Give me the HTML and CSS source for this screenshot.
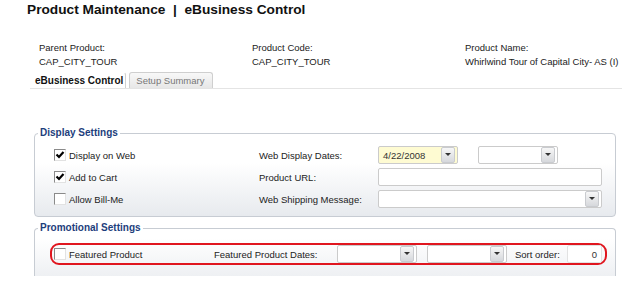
FILE: index.html
```html
<!DOCTYPE html>
<html lang="en">
<head>
    <meta charset="UTF-8">
    <title>Product Maintenance | eBusiness Control</title>
    <link rel="stylesheet" href="styles.css">
</head>
<body>
<h1 class="title">Product Maintenance &nbsp;|&nbsp; eBusiness Control</h1>

<div class="info">
    <div class="info-item">
        <div>Parent Product:</div>
        <div>CAP_CITY_TOUR</div>
    </div>
    <div class="info-item">
        <div>Product Code:</div>
        <div>CAP_CITY_TOUR</div>
    </div>
    <div class="info-item">
        <div>Product Name:</div>
        <div>Whirlwind Tour of Capital City- AS (I)</div>
    </div>
</div>

<div class="tabs">
    <span class="tab active">eBusiness Control</span>
    <span class="tab">Setup Summary</span>
</div>

<fieldset class="panel">
    <legend>Display Settings</legend>
    <div class="form-grid">
        <div class="check-row">
            <span class="cb checked"><svg viewBox="0 0 10 10" width="10" height="10"><path d="M1.5 4.5 L4 7 L8.5 2" fill="none" stroke="#000" stroke-width="2.2"/></svg></span>
            <span>Display on Web</span>
        </div>
        <div class="field-label">Web Display Dates:</div>
        <div class="field-row">
            <div class="field date yellow">4/22/2008<span class="drop"></span></div>
            <div class="field date gap">
                <span class="drop"></span>
            </div>
        </div>

        <div class="check-row">
            <span class="cb checked"><svg viewBox="0 0 10 10" width="10" height="10"><path d="M1.5 4.5 L4 7 L8.5 2" fill="none" stroke="#000" stroke-width="2.2"/></svg></span>
            <span>Add to Cart</span>
        </div>
        <div class="field-label">Product URL:</div>
        <div class="field-row">
            <div class="field wide"></div>
        </div>

        <div class="check-row">
            <span class="cb"></span>
            <span>Allow Bill-Me</span>
        </div>
        <div class="field-label">Web Shipping Message:</div>
        <div class="field-row">
            <div class="field wide"><span class="drop"></span></div>
        </div>
    </div>
</fieldset>

<fieldset class="panel promo">
    <legend>Promotional Settings</legend>
    <div class="highlight">
        <span class="cb"></span>
        <span class="featured-label">Featured Product</span>
        <span class="dates-label">Featured Product Dates:</span>
        <div class="field date"><span class="drop"></span></div>
        <div class="field date gap-small"><span class="drop"></span></div>
        <span class="sort-label">Sort order:</span>
        <div class="field sort">0</div>
    </div>
</fieldset>
</body>
</html>
```

FILE: styles.css
```css
body {
    margin: 0;
    font-family: "Liberation Sans", Arial, sans-serif;
    font-size: 9.5px;
    color: #222;
    background-color: #fff;
}
.title {
    margin: 0;
    padding: 1px 0 0 27px;
    font-size: 13.7px;
    line-height: 17px;
    font-weight: bold;
    color: #111;
}
.info {
    display: grid;
    grid-template-columns: 213px 213px 1fr;
    margin-top: 23px;
    padding-left: 39px;
    line-height: 14px;
}
.tabs {
    display: flex;
    gap: 3px;
    margin: 3px 18px 0 30px;
    padding-left: 3px;
    border-bottom: 1px solid #e4e4e4;
}
.tab {
    height: 15px;
    line-height: 15px;
    padding: 0 8px 0 6px;
    border: 1px solid #cfcfcf;
    border-bottom: none;
    border-radius: 3px 3px 0 0;
    background: linear-gradient(#f8f8f8, #e7e7e7);
    color: #777;
}
.tab.active {
    padding: 0 2px 0 1px;
    border-color: #fff #d0d0d0 #fff #fff;
    background: #fff;
    color: #111;
    font-weight: bold;
    font-size: 10px;
}
.panel {
    margin: 38px 24px 0 34px;
    padding: 5px 13px 6px 3px;
    border: 1px solid #c7ccd3;
    border-radius: 4px;
    background: linear-gradient(#fff 35%, #e7eaee);
}
.panel legend {
    padding: 0 2px;
    font-size: 10px;
    line-height: 12px;
    font-weight: bold;
    color: #1d3e7c;
}
.form-grid {
    display: grid;
    grid-template-columns: 205px 119px 1fr;
    grid-auto-rows: 22px;
    margin-left: 16px;
    align-items: center;
}
.check-row {
    display: flex;
    align-items: center;
    gap: 3px;
}
.cb {
    display: inline-flex;
    align-items: flex-start;
    justify-content: flex-start;
    width: 12px;
    height: 12px;
    box-sizing: border-box;
    border: 1px solid;
    border-color: #8a8a8a #e2e2e2 #e2e2e2 #8a8a8a;
    background-color: #fff;
    flex-shrink: 0;
}
.field-row {
    display: flex;
    align-items: center;
}
.field {
    display: flex;
    align-items: center;
    height: 18px;
    box-sizing: border-box;
    padding-left: 4px;
    border: 1px solid #cbcbcb;
    border-radius: 2px;
    background-color: #fff;
    color: #333;
}
.field.date {
    width: 80px;
}
.field.yellow {
    background-color: #fefbd2;
}
.field.gap {
    margin-left: 20px;
}
.field.wide {
    width: 100%;
}
.drop {
    position: relative;
    width: 12px;
    height: 14px;
    margin: 0 2px 0 auto;
    border: 1px solid #c9cbcf;
    border-radius: 2px;
    background: linear-gradient(#f7f7f7, #d6d8dc);
}
.drop::after {
    content: "";
    position: absolute;
    left: 3px;
    top: 5px;
    border-left: 3px solid transparent;
    border-right: 3px solid transparent;
    border-top: 3px solid #333;
}
.promo {
    margin-top: 5px;
    padding: 9px 13px 11px 3px;
    border-bottom: none;
    border-radius: 4px 4px 0 0;
    background: linear-gradient(#fff 20%, #eef0f3);
}
.highlight {
    display: flex;
    align-items: center;
    height: 22px;
    box-sizing: border-box;
    margin: 0 -5px 0 12px;
    padding-left: 2px;
    border: 2px solid #e0161f;
    border-radius: 9px;
}
.featured-label {
    width: 145px;
    margin-left: 3px;
}
.dates-label {
    width: 123px;
}
.gap-small {
    margin-left: 10px;
}
.sort-label {
    width: 52px;
    margin-left: 8px;
}
.field.sort {
    width: 35px;
    justify-content: flex-end;
    padding: 0 4px 0 0;
    border-color: #e2e2e2;
}
```
